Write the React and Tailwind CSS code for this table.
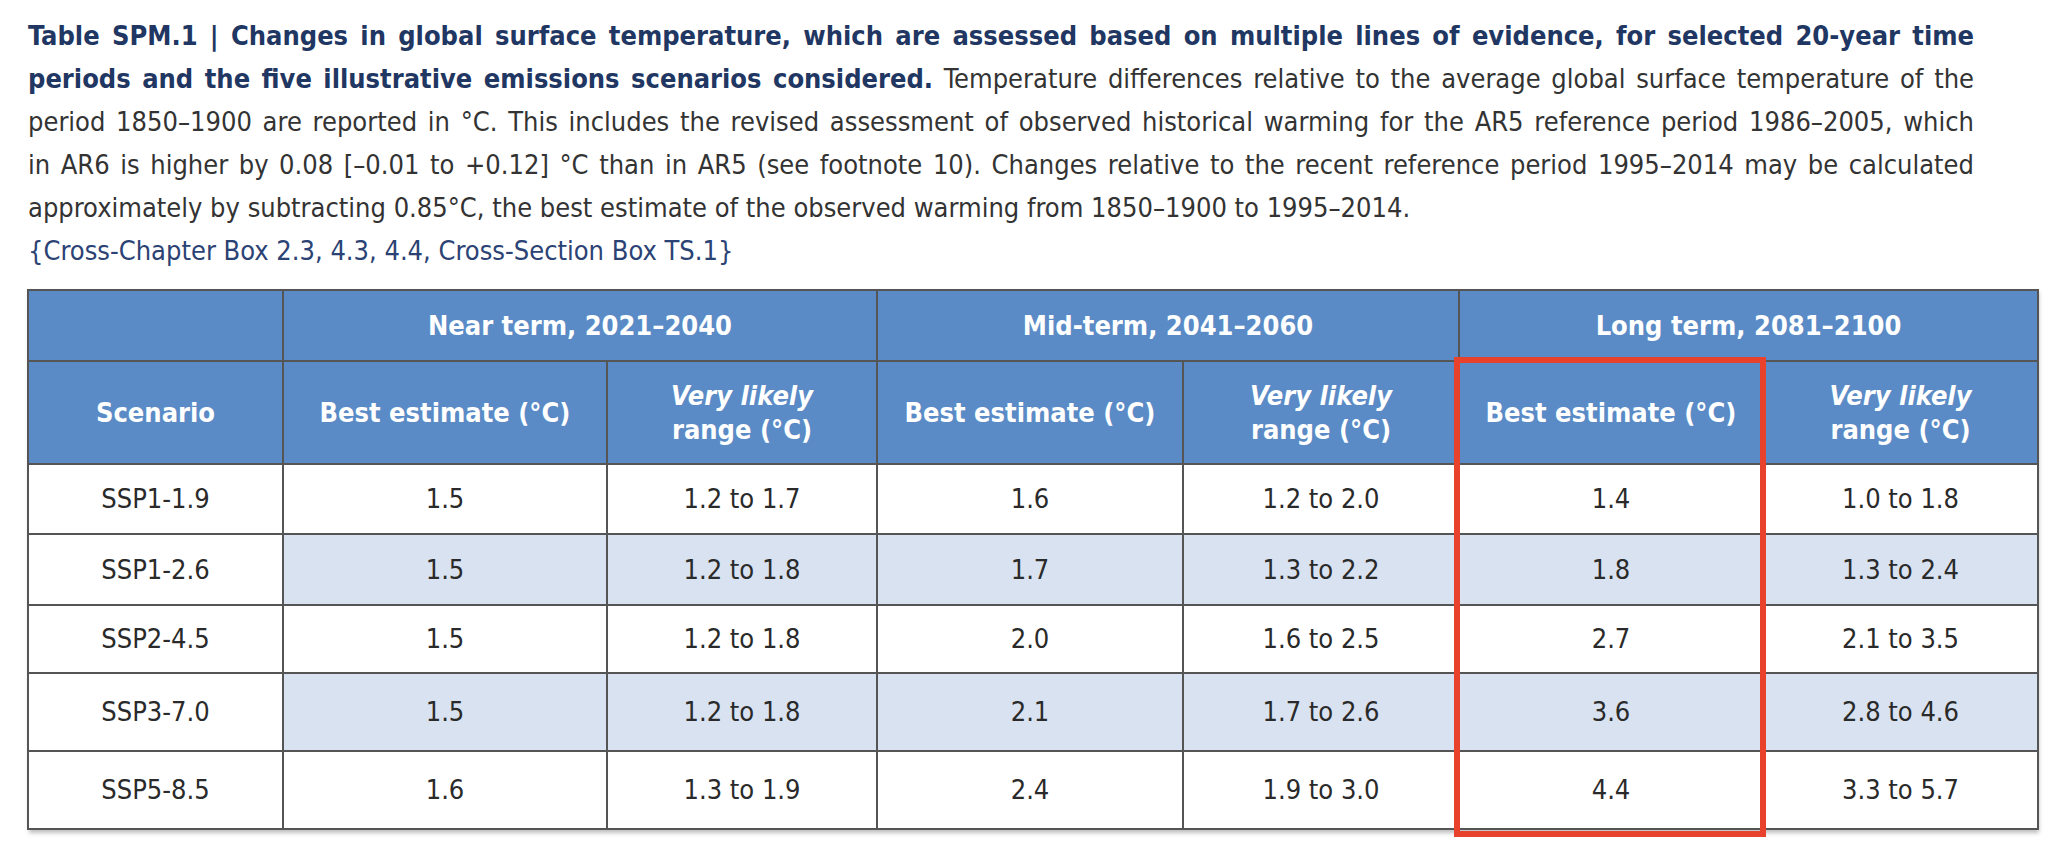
const font = {
  fontFamily: '"Liberation Sans Narrow", "DejaVu Sans Condensed", "Roboto Condensed", "Liberation Sans", sans-serif',
};

const rows = [
  { name: "SSP1-1.9", h: "h-[70px]", shade: false, v: ["1.5", "1.2 to 1.7", "1.6", "1.2 to 2.0", "1.4", "1.0 to 1.8"] },
  { name: "SSP1-2.6", h: "h-[71px]", shade: true, v: ["1.5", "1.2 to 1.8", "1.7", "1.3 to 2.2", "1.8", "1.3 to 2.4"] },
  { name: "SSP2-4.5", h: "h-[68px]", shade: false, v: ["1.5", "1.2 to 1.8", "2.0", "1.6 to 2.5", "2.7", "2.1 to 3.5"] },
  { name: "SSP3-7.0", h: "h-[78px]", shade: true, v: ["1.5", "1.2 to 1.8", "2.1", "1.7 to 2.6", "3.6", "2.8 to 4.6"] },
  { name: "SSP5-8.5", h: "h-[78px]", shade: false, v: ["1.6", "1.3 to 1.9", "2.4", "1.9 to 3.0", "4.4", "3.3 to 5.7"] },
];

const groups = ["Near term, 2021–2040", "Mid-term, 2041–2060", "Long term, 2081–2100"];

function RangeHead() {
  return (
    <>
      <span className="italic">Very likely</span>
      <br />
      range (°C)
    </>
  );
}

export default function App() {
  const cell = "border-2 border-[#555555] text-center align-middle";

  return (
    <div className="w-[2062px] h-[850px] bg-white overflow-hidden" style={font}>
      {/* CAPTION */}
      <div className="pl-[28px] pt-[14px] w-[1974px] text-[27px] leading-[43px] text-[#333333]">
        <div className="text-justify [text-align-last:justify] whitespace-nowrap font-bold text-[#1f3762]">
          Table SPM.1 | Changes in global surface temperature, which are assessed based on multiple lines of evidence, for selected 20-year time
        </div>
        <div className="text-justify [text-align-last:justify] whitespace-nowrap">
          <span className="font-bold text-[#1f3762]">periods and the five illustrative emissions scenarios considered.</span> Temperature differences relative to the average global surface temperature of the
        </div>
        <div className="text-justify [text-align-last:justify] whitespace-nowrap">
          period 1850–1900 are reported in °C. This includes the revised assessment of observed historical warming for the AR5 reference period 1986–2005, which
        </div>
        <div className="text-justify [text-align-last:justify] whitespace-nowrap">
          in AR6 is higher by 0.08 [–0.01 to +0.12] °C than in AR5 (see footnote 10). Changes relative to the recent reference period 1995–2014 may be calculated
        </div>
        <div className="whitespace-nowrap">
          approximately by subtracting 0.85°C, the best estimate of the observed warming from 1850–1900 to 1995–2014.
        </div>
        <div className="whitespace-nowrap text-[#2b4274]">
          {"{Cross-Chapter Box 2.3, 4.3, 4.4, Cross-Section Box TS.1}"}
        </div>
      </div>

      {/* TABLE */}
      <div className="relative ml-[27px] mt-[17px] w-[2010px] shadow-[2px_3px_4px_rgba(0,0,0,0.25)]">
        <table className="w-[2010px] table-fixed border-collapse text-[27px] leading-[34px]">
          <colgroup>
            <col className="w-[255px]" />
            <col className="w-[324px]" />
            <col className="w-[270px]" />
            <col className="w-[306px]" />
            <col className="w-[276px]" />
            <col className="w-[304px]" />
            <col className="w-[275px]" />
          </colgroup>
          <thead className="bg-[#5a8bc6] text-white font-bold">
            <tr className="h-[71px]">
              <th className={cell}></th>
              {groups.map((g) => (
                <th key={g} colSpan={2} className={cell}>
                  {g}
                </th>
              ))}
            </tr>
            <tr className="h-[103px]">
              <th className={cell}>Scenario</th>
              {groups.map((g) => (
                <>
                  <th key={g + "b"} className={cell}>Best estimate (°C)</th>
                  <th key={g + "r"} className={cell}>
                    <RangeHead />
                  </th>
                </>
              ))}
            </tr>
          </thead>
          <tbody className="text-[#2a2a2a]">
            {rows.map((r) => (
              <tr key={r.name} className={r.h}>
                <td className={`${cell} bg-white`}>{r.name}</td>
                {r.v.map((v, i) => (
                  <td key={i} className={`${cell} ${r.shade ? "bg-[#d9e2f0]" : "bg-white"}`}>
                    {v}
                  </td>
                ))}
              </tr>
            ))}
          </tbody>
        </table>

        {/* HIGHLIGHT BOX */}
        <div className="absolute left-[1427px] top-[68px] w-[312px] h-[480px] border-[6px] border-[#e8412c] pointer-events-none" />
      </div>
    </div>
  );
}
